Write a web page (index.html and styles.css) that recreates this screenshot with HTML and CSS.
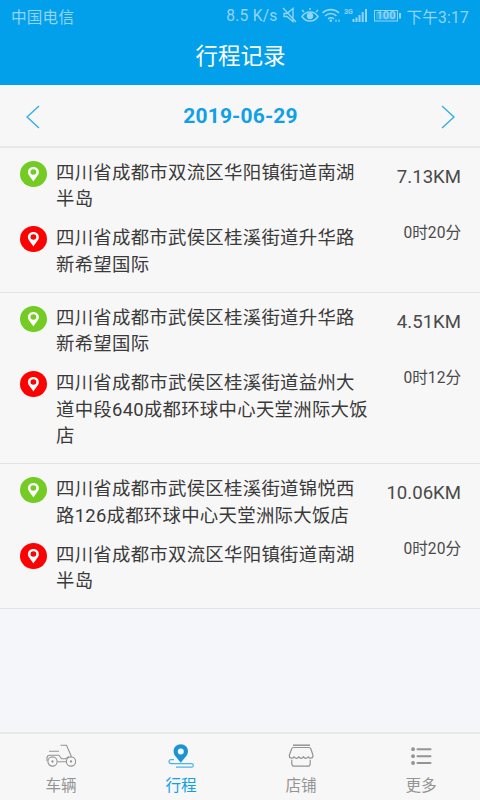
FILE: index.html
```
<!DOCTYPE html>
<html lang="zh-CN">
<head>
  <meta charset="UTF-8">
  <meta name="viewport" content="width=device-width, initial-scale=1.0">
  <title>行程记录</title>
  <link rel="stylesheet" href="styles.css">
</head>
<body>

<svg class="sprite">
  <symbol id="pin" viewBox="0 0 27 26">
    <path fill="#fff" fill-rule="evenodd" d="M13.400 6c-3.200 0-5.500 2.200-5.500 5 0 3.200 3 5.200 5.500 9.500 2.500-4.300 5.500-6.300 5.500-9.500 0-2.800-2.300-5-5.500-5zm0 2.200a2.900 2.800 0 1 1 0 5.600 2.900 2.800 0 0 1 0-5.600z"/>
  </symbol>
</svg>

<div class="app">
  <header class="header">
    <div class="status">
      <span class="carrier">中国电信</span>
      <span class="speed">8.5 K/s</span>
      <svg class="status-icons" width="121" height="20" viewBox="0 0 121 20" fill="none" stroke="currentColor" stroke-width="1.3">
        <!-- muted -->
        <path d="M2 7.500h3l6-5v13l-6-5H2zM1 2l13 14"/>
        <!-- eye -->
        <path d="M20 10.500c4-6 12-6 16 0-4 6-12 6-16 0zM22 6l-2-2M28 4V2M34 6l2-2" stroke-width="1.500"/>
        <circle cx="28" cy="10" r="2.500" fill="currentColor"/>
        <!-- wifi -->
        <path d="M40.500 7c4.500-4.500 12-4.500 16.500 0M43 10c3.500-3.200 8-3.200 11.500 0M46 13c2-1.600 4-1.600 6 0" stroke-width="1.600"/>
        <circle cx="48.800" cy="14.800" r="1.300" fill="currentColor" stroke="none"/>
        <path d="M54 13.500v2.500M57 13.500v2.500" stroke-width="1.200"/>
        <!-- signal -->
        <text x="62" y="7.500" class="net">3G</text>
        <path d="M71.500 13v3M74.500 11.500v4.500M77.500 9v7M80.700 6v10M84 3v13" stroke-width="2"/>
        <!-- battery -->
        <rect x="92.500" y="4.500" width="23" height="10.500" stroke-width="1"/>
        <rect x="94" y="6" width="20" height="7.500" fill="currentColor" opacity=".3" stroke="none"/>
        <path d="M118 7v5.500" stroke-width="2"/>
        <text x="104" y="13.300" text-anchor="middle" class="level">100</text>
      </svg>
      <span class="clock">下午3:17</span>
    </div>
    <h1>行程记录</h1>
  </header>

  <div class="date-bar">
    <svg width="14" height="24" viewBox="0 0 14 24"><path d="M13 1L1 12l12 11"/></svg>
    <span>2019-06-29</span>
    <svg width="14" height="24" viewBox="0 0 14 24"><path d="M1 1l12 11L1 23"/></svg>
  </div>

  <main class="trips">
    <section class="trip">
      <div class="places">
        <div class="place">
          <svg class="dot start"><use href="#pin"/></svg>
          <p>四川省成都市双流区华阳镇街道南湖半岛</p>
        </div>
        <div class="place">
          <svg class="dot end"><use href="#pin"/></svg>
          <p>四川省成都市武侯区桂溪街道升华路新希望国际</p>
        </div>
      </div>
      <div class="info">
        <div class="distance">7.13KM</div>
        <div class="duration">0时20分</div>
      </div>
    </section>

    <section class="trip">
      <div class="places">
        <div class="place">
          <svg class="dot start"><use href="#pin"/></svg>
          <p>四川省成都市武侯区桂溪街道升华路新希望国际</p>
        </div>
        <div class="place">
          <svg class="dot end"><use href="#pin"/></svg>
          <p>四川省成都市武侯区桂溪街道益州大道中段640成都环球中心天堂洲际大饭店</p>
        </div>
      </div>
      <div class="info">
        <div class="distance">4.51KM</div>
        <div class="duration">0时12分</div>
      </div>
    </section>

    <section class="trip">
      <div class="places">
        <div class="place">
          <svg class="dot start"><use href="#pin"/></svg>
          <p>四川省成都市武侯区桂溪街道锦悦西路126成都环球中心天堂洲际大饭店</p>
        </div>
        <div class="place">
          <svg class="dot end"><use href="#pin"/></svg>
          <p>四川省成都市双流区华阳镇街道南湖半岛</p>
        </div>
      </div>
      <div class="info">
        <div class="distance">10.06KM</div>
        <div class="duration">0时20分</div>
      </div>
    </section>
  </main>

  <nav class="tabs">
    <a class="tab">
      <svg width="32" height="26" viewBox="0 0 32 26" fill="none" stroke="currentColor" stroke-width="1.100">
        <circle cx="7.500" cy="18.500" r="4.600"/>
        <circle cx="26" cy="18.500" r="4.600"/>
        <circle cx="7.500" cy="18.500" r=".6" fill="currentColor"/>
        <circle cx="26" cy="18.500" r=".6" fill="currentColor"/>
        <path d="M15.500 2.200h6l5 11.600M4 8.300h10M2 18v-3c0-1.500 1-2.800 3-2.800h9l2.500 3.600h4.200l3.300-2.400M12.200 18.800h9.200"/>
      </svg>
      <span>车辆</span>
    </a>
    <a class="tab active">
      <svg width="32" height="26" viewBox="0 0 32 26">
        <path fill="#1b94d6" fill-rule="evenodd" d="M15.800 1.300c-4.100 0-7.200 3-7.200 7 0 4.200 3.600 6.700 7.200 11.500 3.600-4.800 7.200-7.300 7.200-11.500 0-4-3.100-7-7.200-7zm0 4.300a3 3 0 1 1 0 6 3 3 0 0 1 0-6z"/>
        <path fill="none" stroke="#4db3e6" stroke-width="1.200" d="M9 16.600H6a2 2 0 0 0 0 4h20.500a1.800 1.800 0 0 1 0 3.600H11"/>
      </svg>
      <span>行程</span>
    </a>
    <a class="tab">
      <svg width="32" height="26" viewBox="0 0 32 26" fill="none" stroke="currentColor" stroke-width="1.200">
        <path d="M8 2.200h17" stroke-width="1.500"/>
        <path d="M8.500 4.500h15.500c1 0 1.500.4 1.800 1.300l2.100 6.200c.6 3.200-2.900 4.200-4.700 1.900-1.600 1.900-3.500 1.900-4.800 0-1.300 1.900-3.200 1.900-4.500 0-1.300 1.900-3.200 1.900-4.800 0-1.800 2.300-5.300 1.300-4.700-1.900l2.300-6.200c.3-.9.800-1.300 1.800-1.300z"/>
        <path d="M6.800 16.800v3.900q0 2.500 2.500 2.500h13.400q2.500 0 2.500-2.500v-3.900"/>
      </svg>
      <span>店铺</span>
    </a>
    <a class="tab">
      <svg width="32" height="26" viewBox="0 0 32 26" fill="none" stroke="currentColor" stroke-width="2" stroke-linecap="round">
        <path d="M12.500 6.200h13M12.500 13.200h13M12.500 20h13"/>
        <path d="M8 6.200h.1M8 13.200h.1M8 20h.1" stroke-width="3.800"/>
      </svg>
      <span>更多</span>
    </a>
  </nav>
</div>

</body>
</html>
```
FILE: styles.css
```
* {
  box-sizing: border-box;
}
body {
  margin: 0;
  font-family: Roboto, "Noto Sans CJK SC", sans-serif;
  background: #f4f6f9;
  color: #3a3a3a;
}
h1, p {
  margin: 0;
  font-weight: normal;
}
.sprite {
  display: none;
}
.app {
  display: flex;
  flex-direction: column;
  height: 800px;
}

/* header */
.header {
  height: 85px;
  background: #029feb;
  color: #fff;
}
.status {
  display: flex;
  align-items: center;
  height: 31px;
  padding: 0 11px;
  font-size: 15.600px;
  letter-spacing: 0.2px;
  color: #92d5f7;
  white-space: nowrap;
}
.speed {
  margin-left: auto;
}
.status-icons {
  margin: 0 4px 0 4px;
  letter-spacing: 0;
}
.net, .level {
  fill: currentColor;
  stroke: none;
  font-weight: bold;
}
.net {
  font-size: 7px;
}
.level {
  font-size: 11px;
}
.header h1 {
  padding-left: 1px;
  font-size: 22.500px;
  line-height: 51px;
  text-align: center;
}

/* date */
.date-bar {
  display: flex;
  align-items: center;
  justify-content: space-between;
  height: 63px;
  padding: 0 25px 0 26px;
  background: #f7f7f7;
  border-bottom: 2px solid #e8e8e8;
  font-size: 21px;
  font-weight: bold;
  letter-spacing: 0.15px;
  color: #109fe8;
}
.date-bar svg {
  margin-top: 2px;
  fill: none;
  stroke: #35adea;
  stroke-width: 1.4;
}

/* trip list */
.trips {
  flex: 1;
}
.trip {
  display: flex;
  justify-content: space-between;
  padding: 12px 19px 14px 20px;
  background: #f7f7f7;
  border-bottom: 1px solid #e2e3e4;
}
.places {
  display: flex;
  flex-direction: column;
  gap: 12.800px;
}
.place {
  display: flex;
  gap: 9px;
}
.place p {
  width: 314px;
  font-size: 18.400px;
  line-height: 26.300px;
  letter-spacing: 0.28px;
}
.dot {
  width: 27px;
  height: 26px;
  margin-top: 1px;
  border-radius: 50%;
}
.start {
  background: #73cb23;
}
.end {
  background: #fd0202;
}
.info {
  text-align: right;
  white-space: nowrap;
  color: #4a4a4a;
}
.distance {
  padding-top: 4px;
  font-size: 18.600px;
  line-height: 26px;
}
.duration {
  margin-top: 31px;
  font-size: 15.600px;
  line-height: 24px;
}

/* bottom tabs */
.tabs {
  display: flex;
  height: 68px;
  background: #f7f7f7;
  border-top: 2px solid #e8e8e8;
}
.tab {
  flex: 1;
  display: flex;
  flex-direction: column;
  align-items: center;
  padding: 9px 0 0 2px;
  font-size: 15.600px;
  line-height: 24px;
  color: #949494;
}
.tab span {
  margin-top: 5px;
}
.tab.active {
  color: #109fe8;
}
```
